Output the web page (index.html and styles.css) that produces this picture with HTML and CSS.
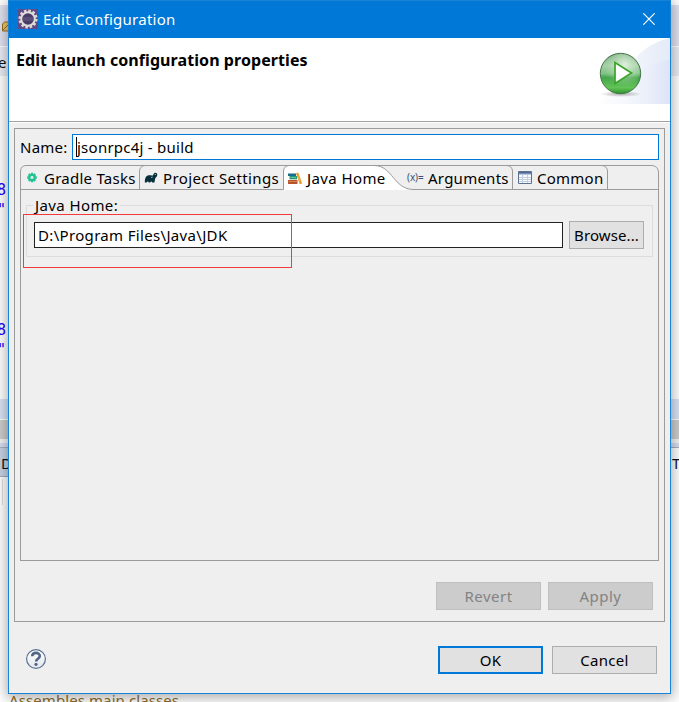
FILE: index.html
```
<!DOCTYPE html>
<html lang="en">
<head>
<meta charset="utf-8">
<title>Edit Configuration</title>
<link rel="stylesheet" href="styles.css">
</head>
<body>
<svg class="workspace" width="679" height="702" viewBox="0 0 679 702" aria-hidden="true">
  <rect width="679" height="702" fill="#fff"/>
  <rect y="5" width="679" height="41" fill="#e0e3f1"/>
  <rect y="46" width="679" height="30" fill="#ebedf5"/>
  <rect y="46" width="679" height="1" fill="#fff"/>
  <rect y="399" width="679" height="20" fill="#d9e4f5"/>
  <rect y="420" width="679" height="19" fill="#cdcdcd"/>
  <rect y="439" width="679" height="4" fill="#f4f4f4"/>
  <rect y="443" width="679" height="4" fill="#d8def0"/>
  <rect y="447" width="679" height="1" fill="#aab0bd"/>
  <rect y="448" width="20" height="28" fill="#c7d4e6"/>
  <rect y="476" width="20" height="1" fill="#a3abb8"/>
  <rect x="2" y="479" width="1" height="26" fill="#ddd"/>
  <path d="M2.500 31V24l2-2h6v9z" fill="#f0c66b" stroke="#9b711f"/>
  <path d="M3 30l6-6" stroke="#9b711f"/>
  <text x="-2" y="68" class="ws-ui">e</text>
  <g class="ws-code">
    <text x="-3" y="195">8</text>
    <text x="-3" y="215">"</text>
    <text x="-3" y="335">8</text>
    <text x="-3" y="355">"</text>
  </g>
  <text x="1" y="469" class="ws-ui">D</text>
  <text x="672" y="469" class="ws-ui">T</text>
  <text x="9" y="706" class="ws-note" textLength="170">Assembles main classes</text>
</svg>

<main class="dialog">
  <header class="titlebar">
    <svg class="app-icon" width="20" height="20" viewBox="0 0 20 20">
      <rect width="20" height="20" fill="#5e4a86"/>
      <circle cx="10" cy="10" r="8.300" fill="none" stroke="#dedbd5" stroke-width="2.600" stroke-dasharray="2.500 1.850"/>
      <circle cx="10" cy="10" r="6.800" fill="#493b68" stroke="#dfddd8" stroke-width="2"/>
      <path d="M4.500 9h11M4.500 11h11" stroke="#7a6b95" stroke-width=".8"/>
    </svg>
    <h1 class="window-title">Edit Configuration</h1>
    <svg class="close" width="12" height="12" viewBox="0 0 12 12"><path d="M.3.300l11.400 11.400M11.700.3L.3 11.700" stroke="#fff" stroke-width="1.200"/></svg>
  </header>

  <section class="banner">
    <h2 class="banner-title">Edit launch configuration properties</h2>
    <svg class="banner-art" width="76" height="66" viewBox="0 0 76 66">
      <defs>
        <linearGradient id="sweep"><stop offset="0" stop-color="#fff"/><stop offset="1" stop-color="#dbe3f5"/></linearGradient>
        <linearGradient id="sweep2"><stop offset="0" stop-color="#fff" stop-opacity="0"/><stop offset="1" stop-color="#d8e1f6"/></linearGradient>
        <linearGradient id="ball" x2="0" y2="1"><stop offset="0" stop-color="#75aa7d"/><stop offset=".3" stop-color="#a3cda5"/><stop offset=".5" stop-color="#7fc285"/><stop offset=".6" stop-color="#46a54c"/><stop offset=".85" stop-color="#62c456"/><stop offset="1" stop-color="#2c922c"/></linearGradient>
        <radialGradient id="shade"><stop offset="0" stop-color="#777" stop-opacity=".6"/><stop offset="1" stop-color="#777" stop-opacity="0"/></radialGradient>
        <radialGradient id="gloss" cx=".6" cy=".3" r=".6"><stop offset="0" stop-color="#e4f3e2" stop-opacity=".9"/><stop offset="1" stop-color="#bce0b8" stop-opacity="0"/></radialGradient>
      </defs>
      <path d="M2 66C25 58 30 10 76 0V66z" fill="url(#sweep)" opacity=".75"/>
      <path d="M20 66C32 40 49 25 76 22V66z" fill="url(#sweep2)" opacity=".7"/>
      <ellipse cx="27" cy="56" rx="21" ry="3" fill="url(#shade)"/>
      <circle cx="26.500" cy="35.500" r="20.200" fill="url(#ball)" stroke="#47754b"/>
      <circle cx="27" cy="34" r="18" fill="url(#gloss)"/>
      <path d="M21 24.500V45.500L37.500 35z" fill="#fff" stroke="#3aa42b" stroke-width="1.700"/>
    </svg>
  </section>

  <div class="content">
    <section class="panel">
      <div class="name-row">
        <label class="name-label" for="name"><span>Name:</span></label>
        <div class="name-field" id="name"><i class="caret"></i><span class="name-value">jsonrpc4j - build</span></div>
      </div>

      <section class="folder">
        <nav class="tabs">
          <svg class="tab-lines" width="639" height="25" viewBox="0 0 639 25" fill="none">
            <path d="M263.500 24.500V5.500Q264 2 268 .5H354C373 .5 373 24.500 394 24.500z" fill="#fff"/>
            <path d="M.5 25V6Q1 .5 6 .5H632Q638 1 638.500 7V25" stroke="#9b9b9b"/>
            <path d="M.5 24.500H263.500V6Q264 1 269 .5M119.500 24V6Q120 1 125 .5M354 .5C373 .5 373 24.500 394 24.500H638.500M487 .5Q492 1 492.500 6V24M582 .5Q587 1 587.500 6V24" stroke="#9b9b9b"/>
            <path d="M264 24.500H387" stroke="#fff"/>
          </svg>
          <div class="tab tab-gradle">
            <svg width="12" height="12" viewBox="-.6 0 13.200 13.200"><g stroke="#20c493" stroke-width="2.600"><path d="M6 .7v10.600M.7 6h10.600M2.300 2.300l7.400 7.400M9.700 2.300L2.300 9.700"/></g><circle cx="6" cy="6" r="3.900" fill="#20c493"/><circle cx="6" cy="6" r="1.600" fill="#efefef"/></svg>
            <span class="t-gradle">Gradle Tasks</span>
          </div>
          <div class="tab tab-project">
            <svg width="14" height="12" viewBox="0 0 14 12"><path d="M.8 10.500C.8 7 1.300 4.600 3.700 3.600c1.800-.8 3.400.2 5.200-.2C9.600 2.700 9.200 1.600 10.500 1c2.200-.7 3.400 1.200 2.500 3-.5 1-1.300 1.300-1.800 2.500-.4 1.300-.5 2.700-.7 4H8.200c-.2-1.200-1.700-1.200-2 0H4.700c-.2-1.200-1.800-1.200-2.100 0z" fill="#07303d"/><path d="M10.800 2.400h1.200M7 5.500l1.600-.5" stroke="#dce5e7" stroke-width=".7"/></svg>
            <span class="t-project">Project Settings</span>
          </div>
          <div class="tab tab-java">
            <svg width="16" height="13" viewBox="0 0 16 13"><path d="M1 1.500h8v2.500H1z" fill="#176f8a"/><path d="M2.500 4h7.500v3.300H2.500z" fill="#299773"/><path d="M3.500 5.500h5.500" stroke="#80d1ae" stroke-width=".7"/><path d="M1 8h9.500v4H1z" fill="#b8552c"/><path d="M1.500 9.500h8.500" stroke="#df8b59" stroke-width=".8"/><path d="M9 1.200L11.200.5l4 11-2.500.7z" fill="#e99a28"/><path d="M10.500 3.500l2.300 6" stroke="#f7c262" stroke-width=".8"/></svg>
            <span class="t-java">Java Home</span>
          </div>
          <div class="tab tab-args">
            <span class="var-icon">(x)=</span>
            <span class="t-args">Arguments</span>
          </div>
          <div class="tab tab-common">
            <svg width="14" height="14" viewBox="0 0 14 14"><path d="M.5.500h13v12H.5z" fill="#f8fbff" stroke="#5b7295"/><path d="M1 1h12v2.500H1z" fill="#7890b4"/><path d="M4.500 4v8M9.500 4v8M1 6.500h12M1 8.500h12M1 10.500h12" stroke="#c3cfdf"/><path d="M1 1.500h12" stroke="#51698f"/></svg>
            <span class="t-common">Common</span>
          </div>
        </nav>
        <div class="folder-body">
          <fieldset class="group">
            <legend class="legend"><span>Java Home:</span></legend>
            <div class="path-row">
              <div class="path-field"><span class="path-value">D:\Program Files\Java\JDK</span></div>
              <button class="btn browse"><span>Browse...</span></button>
            </div>
          </fieldset>
          <div class="highlight"></div>
        </div>
      </section>

      <div class="panel-actions">
        <button class="btn disabled"><span>Revert</span></button>
        <button class="btn disabled"><span>Apply</span></button>
      </div>
    </section>

    <footer class="footer">
      <svg class="help" width="22" height="22" viewBox="0 0 22 22">
        <defs><linearGradient id="hg" x2="0" y2="1"><stop offset="0" stop-color="#fff"/><stop offset="1" stop-color="#e3e6ec"/></linearGradient></defs>
        <circle cx="11" cy="11" r="9.400" fill="url(#hg)" stroke="#5c7092" stroke-width="1.200"/>
        <path d="M7.200 8.200C7.400 3.800 14.800 3.900 14.800 8c0 2.700-3.700 2.700-3.700 5.400" fill="none" stroke="#526487" stroke-width="2.600"/>
        <circle cx="11" cy="16.300" r="1.600" fill="#526487"/>
      </svg>
      <div class="footer-actions">
        <button class="btn primary"><span>OK</span></button>
        <button class="btn"><span>Cancel</span></button>
      </div>
    </footer>
  </div>
</main>
</body>
</html>
```
FILE: styles.css
```
* { box-sizing: border-box; }
body {
  margin: 0;
  width: 679px;
  height: 702px;
  overflow: hidden;
  position: relative;
  font: 15px/20px "Noto Sans", "Open Sans", sans-serif;
  letter-spacing: .25px;
  color: #000;
}
.workspace { position: absolute; left: 0; top: 0; letter-spacing: 0; }
.ws-ui { font-size: 15px; fill: #111; }
.ws-code { font: 15px "DejaVu Sans Mono", monospace; fill: #2a00ff; }
.ws-note { font-size: 15px; fill: #8f6d2a; }

.dialog {
  position: relative;
  width: 663px;
  height: 694px;
  margin-left: 8px;
  display: flex;
  flex-direction: column;
  border: 1px solid #1883d7;
  background: #efefef;
  box-shadow: 0 2px 12px 2px rgba(0, 0, 0, .32);
}
.titlebar {
  height: 37px;
  flex: none;
  display: flex;
  align-items: center;
  padding: 0 15px 1px 9px;
  background: #0078d7;
  color: #fff;
}
.window-title {
  margin: 0 auto 0 5px;
  font-size: 15px;
  font-weight: 400;
  line-height: 20px;
  white-space: nowrap;
}
.banner {
  height: 84px;
  flex: none;
  display: flex;
  justify-content: space-between;
  background: #fff;
  border-bottom: 1px solid #a0a0a0;
}
.banner-title {
  margin: 12px 0 0 7px;
  font-size: 16px;
  line-height: 20px;
  letter-spacing: .08px;
  white-space: nowrap;
}
.content {
  flex: 1;
  padding: 5px 5px 0;
  border-top: 1px solid #fff;
  display: flex;
  flex-direction: column;
}
.panel {
  height: 494px;
  padding: 5px;
  border: 1px solid #9b9b9b;
}
.name-row { display: flex; height: 26px; }
.name-label { width: 52px; line-height: 27px; white-space: nowrap; }
.name-field {
  flex: 1;
  border: 1px solid #0078d7;
  background: #fff;
  display: flex;
  align-items: center;
  padding-left: 3px;
  white-space: nowrap;
}
.caret { width: 1px; height: 20px; background: #000; }
.folder {
  margin-top: 5px;
  height: 396px;
  display: flex;
  flex-direction: column;
}
.tabs {
  position: relative;
  height: 25px;
  display: grid;
  grid-template-columns: 119px 144px 122px 107px 95px;
}
.tab-lines { position: absolute; left: 0; top: 0; }
.tab {
  position: relative;
  display: flex;
  align-items: center;
  padding-top: 1px;
  white-space: nowrap;
}
.tab-gradle { padding-left: 6px; gap: 6px; }
.tab-project { padding-left: 5px; gap: 5px; }
.tab-java { padding-left: 4px; gap: 4px; }
.tab-args { padding-left: 2px; gap: 4px; }
.tab-common { padding-left: 6px; gap: 5px; }
.t-project { letter-spacing: .38px; }
.t-java, .legend { letter-spacing: .4px; }
.var-icon { font-size: 10px; line-height: 12px; margin-top: -2px; color: #3d5078; width: 17px; letter-spacing: -.1px; }
.folder-body {
  position: relative;
  flex: 1;
  padding: 15px 5px;
  border: 1px solid #9b9b9b;
  border-top: 0;
}
.group {
  position: relative;
  margin: 0;
  padding: 17px 8px 0 7px;
  min-width: 0;
  height: 52px;
  border: 1px solid #dcdcdc;
}
.legend {
  position: absolute;
  left: 6px;
  top: -11px;
  padding: 0 2px;
  background: #efefef;
  white-space: nowrap;
}
.path-row { display: flex; align-items: center; gap: 6px; height: 26px; margin-top: -1px; }
.path-field {
  flex: 1;
  height: 26px;
  padding-left: 3px;
  line-height: 25px;
  letter-spacing: .33px;
  border: 1px solid #222;
  background: #fff;
  white-space: nowrap;
}
.highlight {
  position: absolute;
  left: 2px;
  top: 24px;
  width: 269px;
  height: 54px;
  border: 1px solid #f43b3b;
}
.btn {
  width: 105px;
  height: 28px;
  flex: none;
  padding: 0;
  border: 1px solid #adadad;
  background: #e1e1e1;
  color: #000;
  font: inherit;
  letter-spacing: .3px;
  white-space: nowrap;
}
.browse { width: 75px; letter-spacing: .1px; }
.disabled { background: #ccc; border-color: #bfbfbf; color: #838383; letter-spacing: .5px; }
.primary { border: 2px solid #0078d7; }
.panel-actions {
  display: flex;
  justify-content: flex-end;
  gap: 7px;
  padding: 21px 6px 0 0;
}
.footer {
  display: flex;
  justify-content: space-between;
  padding: 24px 8px 0 11px;
}
.help { margin-top: 2px; }
.footer-actions { display: flex; gap: 9px; }
```
